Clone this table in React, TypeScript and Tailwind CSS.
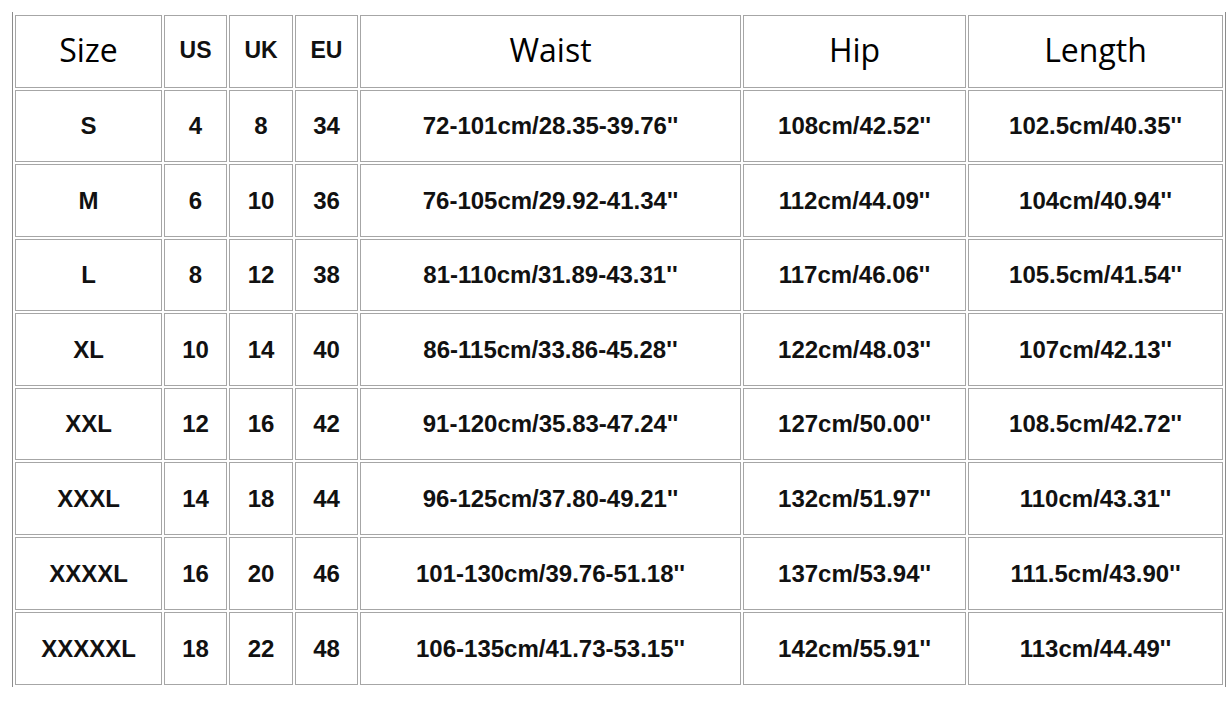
import React from 'react';

interface SizeRow {
  size: string;
  us: string;
  uk: string;
  eu: string;
  waist: string;
  hip: string;
  length: string;
}

const rows: SizeRow[] = [
  { size: 'S', us: '4', uk: '8', eu: '34', waist: "72-101cm/28.35-39.76''", hip: "108cm/42.52''", length: "102.5cm/40.35''" },
  { size: 'M', us: '6', uk: '10', eu: '36', waist: "76-105cm/29.92-41.34''", hip: "112cm/44.09''", length: "104cm/40.94''" },
  { size: 'L', us: '8', uk: '12', eu: '38', waist: "81-110cm/31.89-43.31''", hip: "117cm/46.06''", length: "105.5cm/41.54''" },
  { size: 'XL', us: '10', uk: '14', eu: '40', waist: "86-115cm/33.86-45.28''", hip: "122cm/48.03''", length: "107cm/42.13''" },
  { size: 'XXL', us: '12', uk: '16', eu: '42', waist: "91-120cm/35.83-47.24''", hip: "127cm/50.00''", length: "108.5cm/42.72''" },
  { size: 'XXXL', us: '14', uk: '18', eu: '44', waist: "96-125cm/37.80-49.21''", hip: "132cm/51.97''", length: "110cm/43.31''" },
  { size: 'XXXXL', us: '16', uk: '20', eu: '46', waist: "101-130cm/39.76-51.18''", hip: "137cm/53.94''", length: "111.5cm/43.90''" },
  { size: 'XXXXXL', us: '18', uk: '22', eu: '48', waist: "106-135cm/41.73-53.15''", hip: "142cm/55.91''", length: "113cm/44.49''" },
];

const cell = 'flex items-center justify-center border border-[#a6a6a6] bg-white';
const bigHead = `${cell} pb-[4px] font-['Open_Sans',sans-serif] text-[32px] text-black`;
const smallHead = `${cell} pb-[2px] font-['Liberation_Sans',Arial,sans-serif] font-bold text-[23px] text-[#111]`;
const body = `${cell} font-['Liberation_Sans',Arial,sans-serif] font-bold text-[24px] text-[#111]`;

export default function App() {
  return (
    <div className="w-[1230px] h-[706px] bg-white overflow-hidden">
      <div className="ml-[12px] mt-[12px] w-[1214px] border-x border-[#8c8c8c] px-[2px] pt-[3px] pb-[2px]">
        <div className="grid grid-cols-[147px_63px_64px_63px_381px_223px_255px] grid-rows-[73px_72px_73px_72px_73px_72px_73px_73px_73px] gap-[2px]">
          <div className={bigHead}>Size</div>
          <div className={smallHead}>US</div>
          <div className={smallHead}>UK</div>
          <div className={smallHead}>EU</div>
          <div className={bigHead}>Waist</div>
          <div className={bigHead}>Hip</div>
          <div className={bigHead}>Length</div>

          {rows.map((r) => (
            <React.Fragment key={r.size}>
              <div className={body}>{r.size}</div>
              <div className={body}>{r.us}</div>
              <div className={body}>{r.uk}</div>
              <div className={body}>{r.eu}</div>
              <div className={body}>{r.waist}</div>
              <div className={body}>{r.hip}</div>
              <div className={body}>{r.length}</div>
            </React.Fragment>
          ))}
        </div>
      </div>
    </div>
  );
}
